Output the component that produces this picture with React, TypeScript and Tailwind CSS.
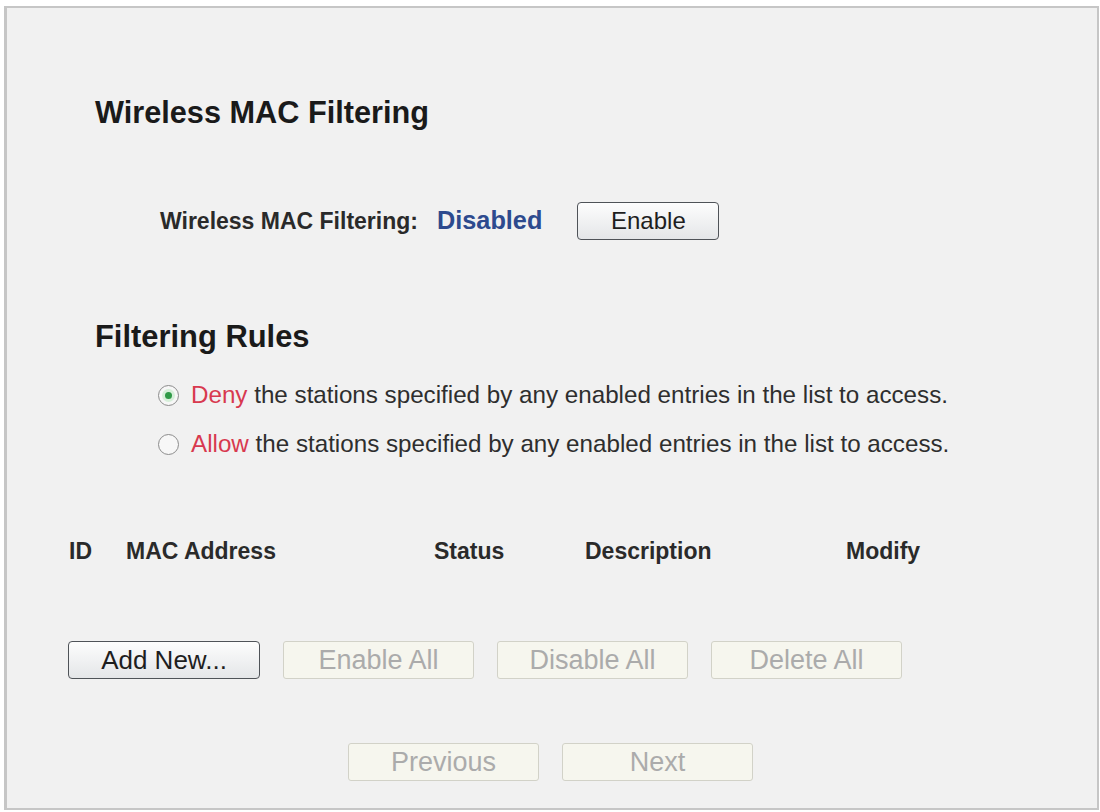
import React from "react";

const font = { fontFamily: '"Liberation Sans", Arial, sans-serif' };

function Radio({ checked }: { checked?: boolean }) {
  return (
    <span className="relative flex h-[21px] w-[21px] shrink-0 items-center justify-center rounded-full border-[1.5px] border-[#8c8c8c] bg-[#f7f7f7]">
      {checked && (
        <span className="flex h-[13px] w-[13px] items-center justify-center rounded-full bg-[#d6efd9]">
          <span className="h-[7px] w-[7px] rounded-full bg-[#2f9a47]" />
        </span>
      )}
    </span>
  );
}

function ActiveButton({ label, className }: { label: string; className: string }) {
  return (
    <button
      className={`flex items-center justify-center rounded-[4px] border border-[#4f5358] bg-gradient-to-b from-[#fdfdfd] to-[#e4e6e8] text-[#1e1e1e] ${className}`}
    >
      {label}
    </button>
  );
}

function GreyButton({ label }: { label: string }) {
  return (
    <button className="flex h-[38px] w-[191px] items-center justify-center rounded-[3px] border border-[#d2d2c8] bg-[#f6f6ee] text-[27px] text-[#ababab]">
      {label}
    </button>
  );
}

function RuleRow({ word, checked }: { word: string; checked?: boolean }) {
  return (
    <div className="ml-[151px] flex h-[30px] items-center text-[24.2px] leading-[30px] text-[#2e2e2e]">
      <Radio checked={checked} />
      <span className="ml-[12px] whitespace-nowrap">
        <span className="text-[#d8394f]">{word}</span> the stations specified by any enabled entries in the list to access.
      </span>
    </div>
  );
}

export default function App() {
  return (
    <div className="min-h-[812px] w-[1100px] bg-white pl-[4px] pt-[6px]" style={font}>
      <div className="flex h-[804px] w-[1095px] flex-col border-2 border-l-[3px] border-[#c6c6c6] bg-[#f1f1f1]">
        {/* Section title */}
        <h1 className="ml-[88px] mt-[87px] text-[30.7px] font-bold leading-[36px] text-[#1a1a1a]">
          Wireless MAC Filtering
        </h1>

        {/* Filtering state */}
        <div className="ml-[153px] mt-[71px] flex h-[38px] items-center">
          <span className="text-[23px] font-bold text-[#2a2a2a]">Wireless MAC Filtering:</span>
          <span className="ml-[19px] text-[25.3px] font-bold text-[#2d4a8e]">Disabled</span>
          <ActiveButton label="Enable" className="ml-[35px] h-[38px] w-[142px] text-[24px]" />
        </div>

        {/* Rules */}
        <h2 className="ml-[88px] mt-[79px] text-[30.9px] font-bold leading-[36px] text-[#1a1a1a]">
          Filtering Rules
        </h2>
        <div className="mt-[25px]">
          <RuleRow word="Deny" checked />
        </div>
        <div className="mt-[19px]">
          <RuleRow word="Allow" />
        </div>

        {/* Entry table header */}
        <div className="mt-[77px] flex h-[30px] items-center text-[23px] font-bold leading-[30px] text-[#2a2a2a]">
          <span className="ml-[62px] w-[57px]">ID</span>
          <span className="w-[308px]">MAC Address</span>
          <span className="w-[151px]">Status</span>
          <span className="w-[261px]">Description</span>
          <span>Modify</span>
        </div>

        {/* Bulk actions */}
        <div className="ml-[61px] mt-[75px] flex gap-[23px]">
          <ActiveButton label="Add New..." className="h-[38px] w-[192px] text-[26px]" />
          <GreyButton label="Enable All" />
          <GreyButton label="Disable All" />
          <GreyButton label="Delete All" />
        </div>

        {/* Paging */}
        <div className="ml-[341px] mt-[64px] flex gap-[23px]">
          <GreyButton label="Previous" />
          <GreyButton label="Next" />
        </div>
      </div>
    </div>
  );
}
